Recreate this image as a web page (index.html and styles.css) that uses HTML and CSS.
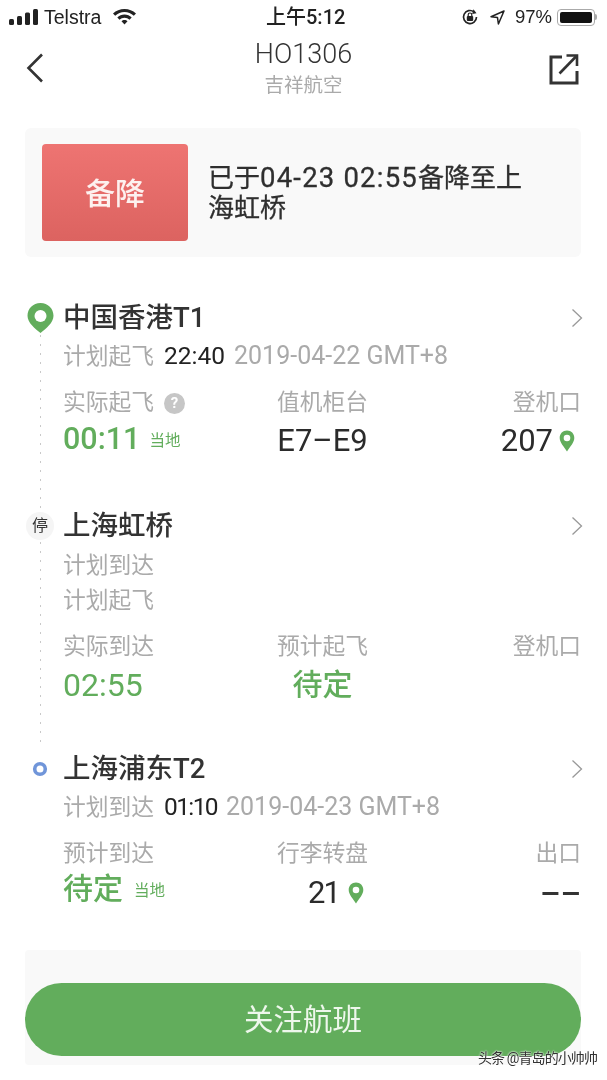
FILE: index.html
```html
<!DOCTYPE html>
<html lang="zh-CN">
<head>
<meta charset="utf-8">
<title>HO1306</title>
<link rel="stylesheet" href="styles.css">
</head>
<body>
<div class="screen">
  <header class="statusbar">
    <div class="sb-left">
      <svg class="sb-signal" width="29" height="16" viewBox="0 0 29 16"><rect x="0" y="10" width="5" height="6" rx="1.5"/><rect x="8" y="7" width="5" height="9" rx="1.5"/><rect x="16" y="3.500" width="5" height="12.500" rx="1.500"/><rect x="24" y="0" width="5" height="16" rx="1.500"/></svg>
      <span class="sb-carrier">Telstra</span>
      <svg class="sb-wifi" width="23" height="16" viewBox="0 0 23 16"><path d="M11.500 0C7 0 3.100 1.700 0 4.500L2.200 6.800C4.700 4.500 8 3.100 11.500 3.100S18.300 4.500 20.800 6.800L23 4.500C19.900 1.700 16 0 11.500 0Z"/><path d="M11.500 5.600C8.700 5.600 6.200 6.700 4.300 8.500L6.500 10.800C7.800 9.500 9.600 8.700 11.500 8.700S15.200 9.500 16.500 10.800L18.700 8.500C16.800 6.700 14.300 5.600 11.500 5.600Z"/><path d="M11.500 11C10.300 11 9.300 11.500 8.500 12.300L11.500 15.600L14.500 12.300C13.700 11.500 12.700 11 11.500 11Z"/></svg>
    </div>
    <div class="sb-time">上午5:12</div>
    <div class="sb-right">
      <svg class="sb-lock" width="18" height="18" viewBox="0 0 18 18"><path d="M15.500 9A6.500 6.500 0 1 1 13 3.900" fill="none" stroke="#222" stroke-width="1.700"/><path d="M11.500 1.500L15.800 4.300L12 6.500Z" fill="#222" transform="rotate(20 13 4)"/><rect x="5.800" y="8" width="6.400" height="5" rx="1" fill="#222"/><path d="M7.200 8V6.800A1.800 1.800 0 0 1 10.800 6.800V8" fill="none" stroke="#222" stroke-width="1.200"/></svg>
      <svg class="sb-loc" width="15" height="15" viewBox="0 0 15 15"><path d="M14 1L1 6.800L7.500 7.600L8.400 14Z" fill="none" stroke="#222" stroke-width="1.500" stroke-linejoin="round"/></svg>
      <span class="sb-pct">97%</span>
      <div class="battery"><div class="battery-fill"></div></div>
      <div class="battery-cap"></div>
    </div>
  </header>

  <nav class="navbar">
    <svg class="nav-back" width="18" height="30" viewBox="0 0 18 30"><path d="M16 1.500L2.500 15L16 28.500" fill="none" stroke="#333" stroke-width="2.600"/></svg>
    <div class="nav-title">
      <div class="flight-no">HO1306</div>
      <div class="airline">吉祥航空</div>
    </div>
    <svg class="nav-share" width="30" height="32" viewBox="0 0 30 32"><path d="M13 4H2V30H28V18" fill="none" stroke="#333" stroke-width="3"/><path d="M10.500 20.500L27 3.500" fill="none" stroke="#333" stroke-width="2.600"/><path d="M17.500 2.500H28V13" fill="none" stroke="#333" stroke-width="2.600"/></svg>
  </nav>

  <section class="alert-card">
    <div class="alert-badge">备降</div>
    <p class="alert-text">已于<span class="alert-latin">04-23 02:55</span>备降至上海虹桥</p>
  </section>

  <main class="timeline">
    <div class="rail"></div>

    <article class="stop stop-origin">
      <div class="stop-head">
        <div class="marker">
          <svg width="27" height="30" viewBox="0 0 27 30"><path d="M13.500 0C6 0 0.500 5.600 0.500 12.800C0.500 20 8 25.500 13.500 30C19 25.500 26.500 20 26.500 12.800C26.500 5.600 21 0 13.500 0Z" fill="#62ad5c"/><circle cx="13.500" cy="13" r="6" fill="#fff"/></svg>
        </div>
        <h2 class="stop-name">中国香港T1</h2>
        <svg class="chevron" width="12" height="20" viewBox="0 0 12 20"><path d="M1.500 1.500L10.500 10L1.500 18.500" fill="none" stroke="#999" stroke-width="1.300"/></svg>
      </div>
      <div class="plan-row">计划起飞<span class="plan-time">22:40</span><span class="plan-date">2019-04-22 GMT+8</span></div>
      <div class="info-grid">
        <div class="cell">
          <div class="label">实际起飞<span class="help">?</span></div>
          <div class="value value-strong green">00:11<span class="local">当地</span></div>
        </div>
        <div class="cell cell-mid">
          <div class="label">值机柜台</div>
          <div class="value value-drop">E7–E9</div>
        </div>
        <div class="cell cell-end">
          <div class="label">登机口</div>
          <div class="value value-drop">207<svg class="pin" width="16" height="22" viewBox="0 0 16 22"><path d="M8 0.500C3.800 0.500 0.700 3.700 0.700 7.900C0.700 12.500 5 16.500 8 21.500C11 16.500 15.300 12.500 15.300 7.900C15.300 3.700 12.200 0.500 8 0.500Z" fill="#62ad5c"/><circle cx="8" cy="8" r="3.300" fill="#fff"/></svg></div>
        </div>
      </div>
    </article>

    <article class="stop stop-via">
      <div class="stop-head">
        <div class="marker"><span class="via-badge">停</span></div>
        <h2 class="stop-name">上海虹桥</h2>
        <svg class="chevron" width="12" height="20" viewBox="0 0 12 20"><path d="M1.500 1.500L10.500 10L1.500 18.500" fill="none" stroke="#999" stroke-width="1.300"/></svg>
      </div>
      <div class="plan-row plan-first">计划到达</div>
      <div class="plan-row plan-tight">计划起飞</div>
      <div class="info-grid grid-via">
        <div class="cell">
          <div class="label">实际到达</div>
          <div class="value value-low green">02:55</div>
        </div>
        <div class="cell cell-mid">
          <div class="label">预计起飞</div>
          <div class="value value-low value-cjk green">待定</div>
        </div>
        <div class="cell cell-end">
          <div class="label">登机口</div>
        </div>
      </div>
    </article>

    <article class="stop stop-dest">
      <div class="stop-head">
        <div class="marker">
          <svg width="16" height="16" viewBox="0 0 16 16"><circle cx="8" cy="8" r="5.300" fill="#fff" stroke="#7095d9" stroke-width="3.600"/></svg>
        </div>
        <h2 class="stop-name">上海浦东T2</h2>
        <svg class="chevron" width="12" height="20" viewBox="0 0 12 20"><path d="M1.500 1.500L10.500 10L1.500 18.500" fill="none" stroke="#999" stroke-width="1.300"/></svg>
      </div>
      <div class="plan-row">计划到达<span class="plan-time plan-time-narrow">01:10</span><span class="plan-date">2019-04-23 GMT+8</span></div>
      <div class="info-grid">
        <div class="cell">
          <div class="label">预计到达</div>
          <div class="value value-up value-cjk green">待定<span class="local local-near">当地</span></div>
        </div>
        <div class="cell cell-mid">
          <div class="label">行李转盘</div>
          <div class="value value-offset"><span class="num-tight">21</span><svg class="pin" width="16" height="22" viewBox="0 0 16 22"><path d="M8 0.500C3.800 0.500 0.700 3.700 0.700 7.900C0.700 12.500 5 16.500 8 21.500C11 16.500 15.300 12.500 15.300 7.900C15.300 3.700 12.200 0.500 8 0.500Z" fill="#62ad5c"/><circle cx="8" cy="8" r="3.300" fill="#fff"/></svg></div>
        </div>
        <div class="cell cell-end">
          <div class="label">出口</div>
          <div class="value value-dash">––</div>
        </div>
      </div>
    </article>
  </main>

  <div class="bottom-card"></div>
  <button class="follow-btn">关注航班</button>
  <div class="watermark">头条 @青岛的小帅帅</div>
</div>
</body>
</html>
```
FILE: styles.css
```css
* { box-sizing: border-box; }
html, body { margin: 0; padding: 0; background: #fff; }
body {
  font-family: "Roboto", "Noto Sans CJK SC", sans-serif;
  color: #333;
}
.screen {
  position: relative;
  width: 607px;
  height: 1080px;
  overflow: hidden;
  background: #fff;
  filter: blur(0.350px);
}

/* status bar */
.statusbar {
  position: relative;
  display: flex;
  align-items: center;
  justify-content: space-between;
  height: 34px;
  padding: 0 10px 0 9px;
  color: #222;
}
.sb-left, .sb-right { display: flex; align-items: center; }
.sb-signal, .sb-wifi { fill: #222; }
.sb-carrier {
  margin-left: 6px;
  font-family: "Liberation Sans", sans-serif;
  font-size: 19.500px;
}
.sb-wifi { margin-left: 12px; }
.sb-time {
  position: absolute;
  left: 266px;
  top: 2px;
  font-size: 20px;
  line-height: 30px;
  font-weight: 500;
}
.sb-pct {
  margin-left: 10px;
  font-family: "Liberation Sans", sans-serif;
  font-size: 18.500px;
}
.sb-loc { margin-left: 11px; }
.battery {
  margin-left: 5px;
  width: 38px;
  height: 17px;
  padding: 2px;
  border: 1px solid #aaa;
  border-radius: 4px;
}
.battery-fill { width: 100%; height: 100%; background: #111; border-radius: 2px; }
.battery-cap { width: 2px; height: 6px; background: #aaa; border-radius: 0 2px 2px 0; }

/* nav */
.navbar {
  position: relative;
  display: flex;
  align-items: flex-start;
  justify-content: space-between;
  height: 94px;
  padding: 19px 28px 0 26px;
}
.nav-title {
  position: absolute;
  left: 0;
  right: 0;
  top: 0;
  text-align: center;
}
.flight-no { font-size: 27px; line-height: 40px; font-weight: 300; color: #333; }
.airline { font-size: 19.500px; line-height: 24px; color: #aaa; }
.nav-back, .nav-share { position: relative; }

/* alert */
.alert-card {
  display: flex;
  align-items: center;
  gap: 20px;
  height: 129px;
  margin: 0 26px 0 25px;
  padding: 0 17px;
  background: #f9f9f9;
  border-radius: 6px;
}
.alert-badge {
  flex: none;
  width: 146px;
  height: 97px;
  border-radius: 4px;
  background: linear-gradient(#ee7472, #dc6360);
  color: #fdf1ef;
  font-size: 30px;
  line-height: 99px;
  text-align: center;
  font-weight: 500;
}
.alert-text {
  margin: 0;
  padding-top: 1px;
  width: 330px;
  font-size: 26px;
  line-height: 30px;
  font-weight: 400;
  color: #2f2f2f;
  -webkit-text-stroke: 0.300px #2f2f2f;
}
.alert-latin { font-size: 27.500px; line-height: 26px; letter-spacing: 1.200px; }

/* timeline */
.timeline { position: relative; padding: 41px 26px 0 25px; }
.rail {
  position: absolute;
  left: 40px;
  top: 78px;
  width: 1px;
  height: 410px;
  background: repeating-linear-gradient(#c9c9c9 0 2px, transparent 2px 9px);
}
.stop { position: relative; }
.stop-via { margin-top: 45px; }
.stop-dest { margin-top: 44px; }
.stop-head { display: flex; align-items: center; height: 40px; }
.marker {
  display: flex;
  align-items: center;
  justify-content: center;
  flex: none;
  width: 30px;
  margin-right: 8px;
}
.via-badge {
  display: block;
  width: 28px;
  height: 28px;
  border-radius: 50%;
  background: #f5f5f5;
  color: #333;
  font-size: 16px;
  line-height: 28px;
  text-align: center;
}
.stop-name {
  flex: 1;
  margin: 0;
  font-size: 27.500px;
  line-height: 40px;
  font-weight: 500;
  color: #333;
}
.chevron { margin-right: -2px; }
.plan-row {
  margin-left: 38px;
  font-size: 22.750px;
  line-height: 36px;
  color: #aaa;
}
.plan-first { margin-top: 2px; line-height: 35px; }
.plan-tight { line-height: 35px; }
.plan-time { margin-left: 10px; color: #222; font-size: 24.500px; }
.plan-time-narrow { letter-spacing: -1.600px; }
.plan-date { margin-left: 9px; font-size: 25px; color: #aaa; }
.info-grid {
  display: grid;
  grid-template-columns: 214px 91px 1fr;
  margin: 12px 0 0 38px;
}
.grid-via { margin-top: 13px; }
.cell-mid { text-align: center; white-space: nowrap; }
.cell-end { text-align: right; }
.label {
  display: flex;
  align-items: center;
  font-size: 22.750px;
  line-height: 32px;
  color: #aaa;
  white-space: nowrap;
}
.cell-mid .label { justify-content: center; }
.cell-end .label { justify-content: flex-end; }
.help {
  display: block;
  width: 21px;
  height: 21px;
  margin-left: 10px;
  border-radius: 50%;
  background: #c6c6c6;
  color: #fff;
  font-size: 15px;
  line-height: 21px;
  font-weight: 700;
  text-align: center;
}
.value {
  display: flex;
  align-items: center;
  height: 40px;
  font-size: 31px;
  line-height: 40px;
  font-weight: 400;
  color: #2b2b2b;
  white-space: nowrap;
}
.cell-mid .value { justify-content: center; }
.cell-end .value { justify-content: flex-end; }
.value-strong { font-weight: 500; font-size: 30.500px; }
.value-drop { margin-top: 2px; }
.value-low { margin-top: 2px; font-size: 32px; }
.value-up { margin-top: -1px; }
.value-cjk { font-size: 30px; font-weight: 500; }
.value-offset { margin-top: 3px; padding-left: 27px; }
.num-tight { letter-spacing: -2px; }
.value-dash { margin-top: 4px; font-size: 32px; font-weight: 500; color: #333; }
.green { color: #62ad5c; }
.local { position: relative; top: 2px; margin-left: 9px; font-size: 15.500px; font-weight: 400; color: #62ad5c; }
.local-near { margin-left: 11px; }
.pin { margin-left: 6px; margin-right: 6px; }
.cell-mid .pin { margin-left: 9px; margin-right: 0; }

/* bottom */
.bottom-card {
  position: absolute;
  left: 25px;
  right: 26px;
  top: 950px;
  height: 115px;
  background: #f9f9f9;
  border-radius: 4px;
}
.follow-btn {
  position: absolute;
  left: 25px;
  top: 983px;
  width: 556px;
  height: 73px;
  border: 0;
  border-radius: 37px;
  background: #62ad5c;
  color: #eef7ec;
  font-family: inherit;
  font-size: 29.500px;
  line-height: 71px;
  padding: 2px 0 0;
  font-weight: 400;
}
.watermark {
  position: absolute;
  left: 478px;
  top: 1047px;
  font-size: 14px;
  letter-spacing: -0.900px;
  line-height: 22px;
  color: #333;
  text-shadow: 0 0 2px #fff, 0 0 2px #fff;
  white-space: nowrap;
}
```
